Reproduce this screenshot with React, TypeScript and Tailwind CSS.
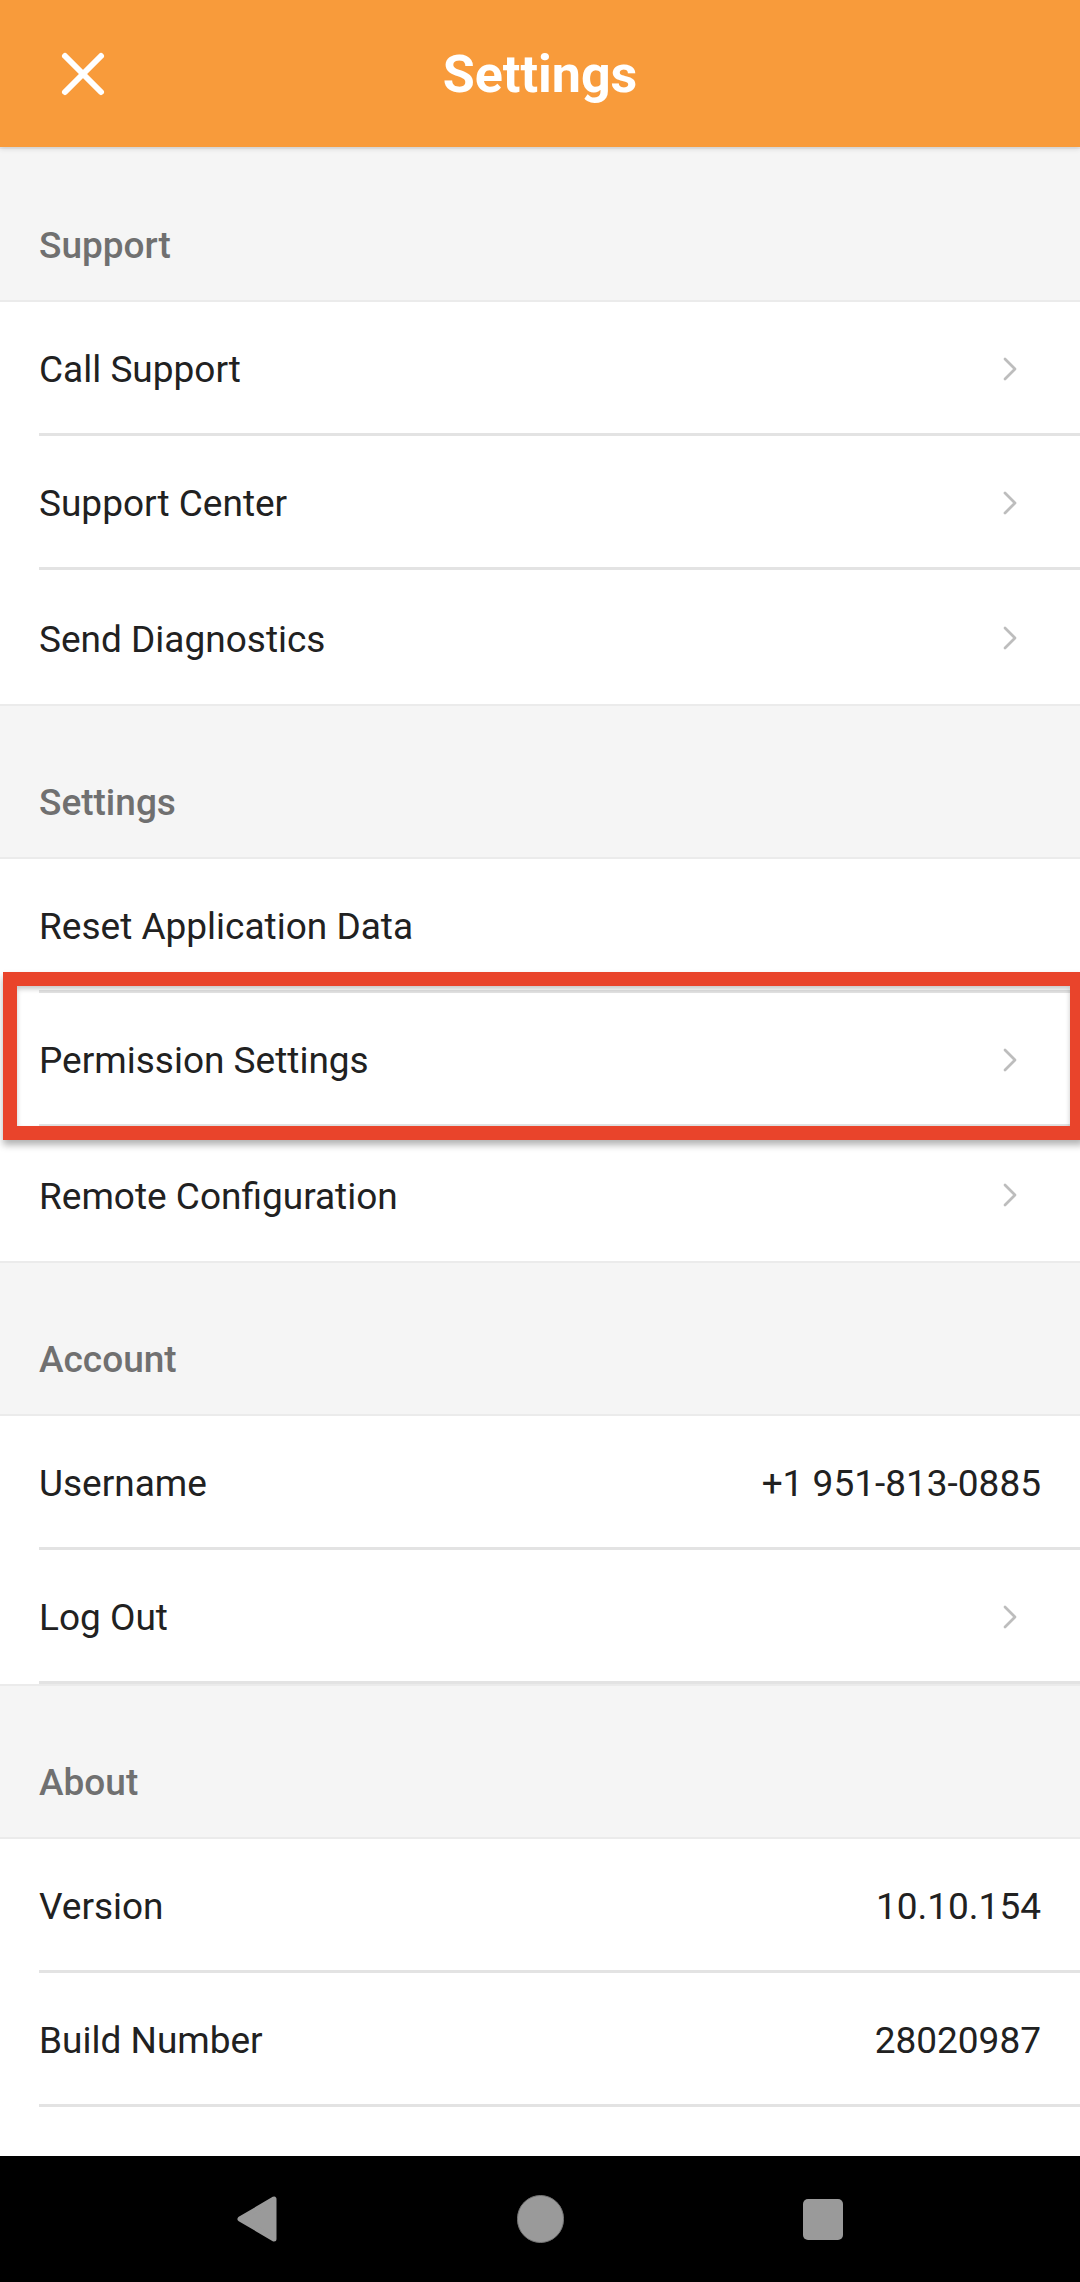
import { X } from 'lucide-react';

const ORANGE = '#f89b3b';

type Row = {
  label: string;
  value?: string;
  chevron?: boolean;
  divider?: boolean;
  highlight?: boolean;
};

type Section = {
  title: string;
  rows: Row[];
};

const SECTIONS: Section[] = [
  {
    title: 'Support',
    rows: [
      { label: 'Call Support', chevron: true, divider: true },
      { label: 'Support Center', chevron: true, divider: true },
      { label: 'Send Diagnostics', chevron: true },
    ],
  },
  {
    title: 'Settings',
    rows: [
      { label: 'Reset Application Data', divider: true },
      { label: 'Permission Settings', chevron: true, divider: true, highlight: true },
      { label: 'Remote Configuration', chevron: true },
    ],
  },
  {
    title: 'Account',
    rows: [
      { label: 'Username', value: '+1 951-813-0885', divider: true },
      { label: 'Log Out', chevron: true, divider: true },
    ],
  },
  {
    title: 'About',
    rows: [
      { label: 'Version', value: '10.10.154', divider: true },
      { label: 'Build Number', value: '28020987', divider: true },
    ],
  },
];

function Chevron() {
  return (
    <svg width="14" height="24" viewBox="0 0 14 24" className="mr-[63px] -mt-[3px]">
      <polyline
        points="2,2 12,12 2,22"
        fill="none"
        stroke="#bdbdbd"
        strokeWidth="2.8"
        strokeLinecap="round"
        strokeLinejoin="round"
      />
    </svg>
  );
}

function SettingsRow({ row }: { row: Row }) {
  return (
    <div className="relative bg-white">
      <div
        className={`flex items-center justify-between pl-[39px] pt-[5px] text-[37px] text-[#212121] ${
          row.divider ? 'h-[131px]' : 'h-[134px]'
        } ${row.value ? 'pr-[39px]' : ''}`}
      >
        <span>{row.label}</span>
        {row.value && <span>{row.value}</span>}
        {row.chevron && <Chevron />}
      </div>
      {row.divider && <div className="ml-[39px] h-[3px] bg-[#e3e3e3]" />}
      {row.highlight && (
        <div className="absolute left-[3px] -right-[4px] -top-[21px] -bottom-[13px] z-10 border-[14px] border-[#e9442b] shadow-[inset_0_3px_5px_rgba(0,0,0,0.22),0_5px_7px_rgba(0,0,0,0.3)]" />
      )}
    </div>
  );
}

export default function App() {
  return (
    <div className="w-[1080px] h-[2282px] overflow-hidden flex flex-col bg-white font-['Roboto',sans-serif]">
      <header
        className="relative z-20 h-[147px] flex items-center shrink-0 shadow-[0_2px_5px_rgba(0,0,0,0.12)]"
        style={{ backgroundColor: ORANGE }}
      >
        <div className="w-[166px] flex justify-center">
          <X size={72} color="#ffffff" strokeWidth={2} />
        </div>
        <h1 className="flex-1 text-center text-[52px] font-bold text-white pt-[3px]">Settings</h1>
        <div className="w-[166px]" />
      </header>

      <main className="flex-1 bg-white">
        {SECTIONS.map((section) => (
          <section key={section.title}>
            <div className="h-[155px] box-border border-y-2 border-[#ebebeb] bg-[#f5f5f5] pt-[42px] pl-[39px] flex items-center text-[37px] font-medium text-[#707070]">
              {section.title}
            </div>
            {section.rows.map((row) => (
              <SettingsRow key={row.label} row={row} />
            ))}
          </section>
        ))}
      </main>

      <nav className="h-[126px] shrink-0 bg-black flex items-center justify-center gap-[183px]">
        <div className="w-[100px] flex justify-center">
          <svg width="42" height="48" viewBox="0 0 42 48">
            <polygon
              points="4,24 38,4 38,44"
              fill="#9a9a9a"
              stroke="#9a9a9a"
              strokeWidth="5"
              strokeLinejoin="round"
            />
          </svg>
        </div>
        <div className="w-[100px] flex justify-center">
          <div className="w-[47px] h-[48px] rounded-full bg-[#9a9a9a] border border-[#777777]" />
        </div>
        <div className="w-[100px] flex justify-center">
          <div className="w-[40px] h-[41px] rounded-[5px] bg-[#9a9a9a]" />
        </div>
      </nav>
    </div>
  );
}
